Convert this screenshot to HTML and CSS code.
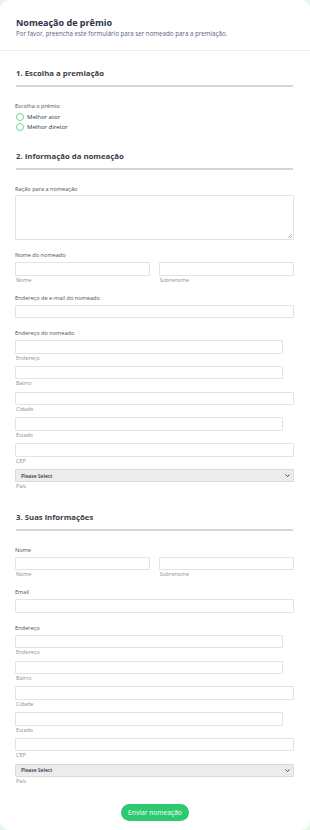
FILE: index.html
```html
<!DOCTYPE html>
<html lang="pt">
<head>
<meta charset="utf-8">
<title>Nomeação de prêmio</title>
<link rel="stylesheet" href="styles.css">
</head>
<body>
<div class="card">
  <header class="head">
    <h1 class="title">Nomeação de prêmio</h1>
    <p class="desc">Por favor, preencha este formulário para ser nomeado para a premiação.</p>
  </header>
  <div class="content">
    <section class="sec">
      <h2 class="sec-title">1. Escolha a premiação</h2>
      <div class="field first">
        <div class="label">Escolha o prêmio</div>
        <div class="radios">
          <label class="radio"><span class="circle"></span>Melhor ator</label>
          <label class="radio"><span class="circle"></span>Melhor diretor</label>
        </div>
      </div>
    </section>

    <section class="sec sec2">
      <h2 class="sec-title">2. Informação da nomeação</h2>
      <div class="field first">
        <div class="label tight">Ração para a nomeação</div>
        <textarea class="area"></textarea>
      </div>
      <div class="field">
        <div class="label">Nome do nomeado</div>
        <div class="name-row">
          <div class="col"><input class="inp" type="text"><div class="sub">Nome</div></div>
          <div class="col"><input class="inp" type="text"><div class="sub">Sobrenome</div></div>
        </div>
      </div>
      <div class="field">
        <div class="label">Endereço de e-mail do nomeado</div>
        <input class="inp" type="text">
      </div>
      <div class="field">
        <div class="label">Endereço do nomeado</div>
        <div class="addr">
          <div class="arow"><input class="inp narrow" type="text"><div class="sub">Endereço</div></div>
          <div class="arow"><input class="inp narrow" type="text"><div class="sub">Bairro</div></div>
          <div class="arow"><input class="inp" type="text"><div class="sub">Cidade</div></div>
          <div class="arow"><input class="inp narrow" type="text"><div class="sub">Estado</div></div>
          <div class="arow"><input class="inp" type="text"><div class="sub">CEP</div></div>
          <div class="arow"><div class="sel"><span>Please Select</span><svg class="chev" viewBox="0 0 10 6" width="5" height="3"><path d="M1 1 L5 5 L9 1" fill="none" stroke="#333" stroke-width="1.8"/></svg></div><div class="sub">País</div></div>
        </div>
      </div>
    </section>

    <section class="sec sec3">
      <h2 class="sec-title">3. Suas informações</h2>
      <div class="field first">
        <div class="label">Nome</div>
        <div class="name-row">
          <div class="col"><input class="inp" type="text"><div class="sub">Nome</div></div>
          <div class="col"><input class="inp" type="text"><div class="sub">Sobrenome</div></div>
        </div>
      </div>
      <div class="field">
        <div class="label">Email</div>
        <input class="inp" type="text">
      </div>
      <div class="field">
        <div class="label">Endereço</div>
        <div class="addr">
          <div class="arow"><input class="inp narrow" type="text"><div class="sub">Endereço</div></div>
          <div class="arow"><input class="inp narrow" type="text"><div class="sub">Bairro</div></div>
          <div class="arow"><input class="inp" type="text"><div class="sub">Cidade</div></div>
          <div class="arow"><input class="inp narrow" type="text"><div class="sub">Estado</div></div>
          <div class="arow"><input class="inp" type="text"><div class="sub">CEP</div></div>
          <div class="arow"><div class="sel"><span>Please Select</span><svg class="chev" viewBox="0 0 10 6" width="5" height="3"><path d="M1 1 L5 5 L9 1" fill="none" stroke="#333" stroke-width="1.8"/></svg></div><div class="sub">País</div></div>
        </div>
      </div>
    </section>
  </div>
  <div class="actions">
    <button class="submit" type="button">Enviar nomeação</button>
  </div>
</div>
</body>
</html>
```
FILE: styles.css
```css
* { box-sizing: border-box; }
html, body { margin: 0; padding: 0; }
body {
  background: #e4f6ea;
  font-family: "Open Sans", "Liberation Sans", sans-serif;
  color: #2c3345;
}
.card {
  background: #fff;
  width: 310px;
  min-height: 830px;
  border-radius: 9px;
  overflow: hidden;
}
.head {
  padding: 18px 16px 12px;
  border-bottom: 1px solid #ededed;
}
.title {
  margin: 0;
  font-size: 9px;
  line-height: 10px;
  font-weight: 700;
  color: #2c3345;
}
.desc {
  margin: 2px 0 0;
  font-size: 6.2px;
  line-height: 8px;
  color: #57647e;
}
.content { padding: 0 16px 0 15px; }
.sec-title {
  margin: 17px 1px 0 1px;
  padding-bottom: 7px;
  font-size: 7.8px;
  line-height: 10px;
  font-weight: 700;
  color: #3a3f4b;
  border-bottom: 2px solid #d6d6d6;
}
.sec2 .sec-title { margin-top: 19px; }
.sec3 .sec-title { margin-top: 22.5px; }
.field { margin-top: 11px; }
.field.first { margin-top: 15px; }
.label {
  font-size: 5.6px;
  line-height: 8px;
  color: #4a5163;
  margin: 0 0 3px 0;
}
.label.tight { margin-bottom: 2.5px; }
.radios { margin-top: -1.5px; }
.radio {
  display: flex;
  align-items: center;
  height: 10px;
  font-size: 6px;
  color: #2c3345;
  padding-left: 1px;
}
.circle {
  width: 8px;
  height: 8px;
  border-radius: 50%;
  border: 0.8px solid #6fd796;
  background: #fff;
  margin-right: 3px;
  flex: none;
}
.area {
  display: block;
  width: 100%;
  height: 45px;
  margin: 0;
  border: 1px solid #e3e3e3;
  border-radius: 1px;
  resize: none;
  background-color: #fff;
  background-image:
    linear-gradient(135deg, transparent 55%, #bdbdbd 55%, #bdbdbd 63%, transparent 63%, transparent 78%, #bdbdbd 78%, #bdbdbd 86%, transparent 86%);
  background-repeat: no-repeat;
  background-size: 5px 5px;
  background-position: right 1px bottom 1px;
}
.inp {
  display: block;
  width: 100%;
  height: 13.5px;
  margin: 0;
  padding: 0;
  border: 1px solid #e3e3e3;
  border-radius: 1px;
  background: #fff;
  outline: none;
}
.inp.narrow { width: 96%; }
.name-row {
  display: grid;
  grid-template-columns: 1fr 1fr;
  column-gap: 8.6px;
}
.sub {
  font-size: 5.4px;
  line-height: 6px;
  margin-top: 1px;
  padding-left: 1px;
  color: #8a8f99;
}
.arow { margin-bottom: 5.25px; }
.arow:last-child { margin-bottom: 0; }
.sel {
  display: flex;
  align-items: center;
  justify-content: space-between;
  height: 13.5px;
  padding: 0 3px 0 5px;
  background: #ececec;
  border: 1px solid #dadada;
  border-radius: 1px;
  font-size: 5px;
  font-weight: 600;
  color: #2c3345;
}
.chev { display: block; }
.actions {
  display: flex;
  justify-content: center;
  padding-top: 20px;
}
.submit {
  height: 17px;
  width: 68px;
  padding: 0;
  border: none;
  border-radius: 9px;
  background: #2dc96e;
  color: #fff;
  font-family: "Open Sans", "Liberation Sans", sans-serif;
  font-size: 6.7px;
  line-height: 17px;
}
```
